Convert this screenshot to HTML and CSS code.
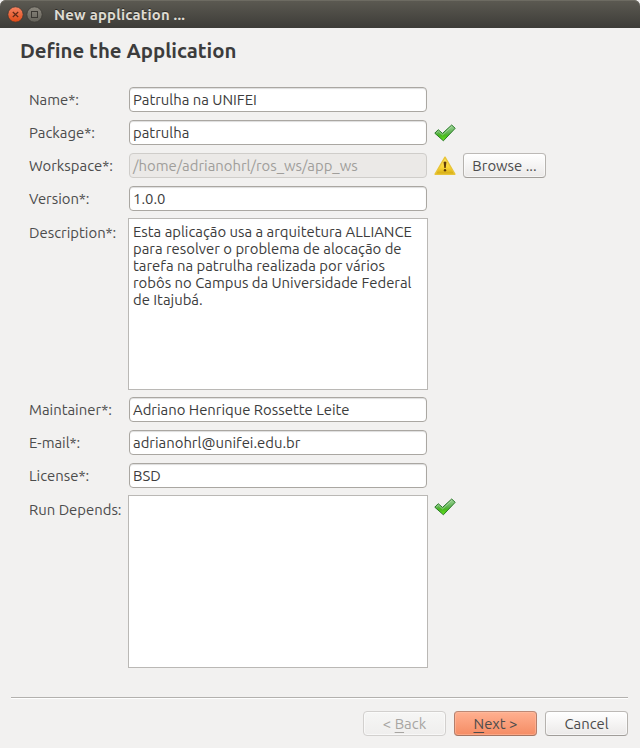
FILE: index.html
```html
<!DOCTYPE html>
<html lang="pt-BR">
<head>
<meta charset="utf-8">
<title>New application ...</title>
<link rel="stylesheet" href="styles.css">
</head>
<body>
<svg width="0" height="0" class="defs" aria-hidden="true">
  <defs>
    <linearGradient id="green" x1="0" y1="0" x2="0" y2="1"><stop offset="0" stop-color="#9fd49b"/><stop offset=".5" stop-color="#5fb350"/><stop offset=".65" stop-color="#48b820"/><stop offset="1" stop-color="#66e51c"/></linearGradient>
    <linearGradient id="yellow" x1="0" y1="0" x2="0" y2="1"><stop offset="0" stop-color="#ffe566"/><stop offset=".6" stop-color="#f9d535"/><stop offset="1" stop-color="#d2a810"/></linearGradient>
    <symbol id="check" viewBox="0 0 22 18"><path d="M.8 9.2 4.2 5.7 8.5 9.4 17.7 1 21.2 4.3 9.4 16.8Z" fill="url(#green)" stroke="#2a7a28" stroke-width="1" stroke-linejoin="round"/><path d="M2.3 9 4.4 7.1 8.6 10.9 17.7 2.5" fill="none" stroke="#c4e8bd" stroke-opacity=".65" stroke-width=".8"/></symbol>
  </defs>
</svg>
<div class="window">
  <header class="titlebar">
    <svg class="controls" width="37" height="18" viewBox="0 0 37 18">
      <defs><linearGradient id="close" x1="0" y1="0" x2="0" y2="1"><stop offset="0" stop-color="#f58463"/><stop offset="1" stop-color="#df4a16"/></linearGradient><linearGradient id="max" x1="0" y1="0" x2="0" y2="1"><stop offset="0" stop-color="#8b887e"/><stop offset="1" stop-color="#636159"/></linearGradient></defs>
      <circle cx="8.5" cy="9.5" r="7.7" fill="url(#close)" stroke="#3b3833" stroke-width=".8"/>
      <path d="m5.8 7 5.4 5m0-5-5.4 5" stroke="#5f2a18" stroke-width="1.2"/>
      <circle cx="27.5" cy="9.5" r="7.7" fill="url(#max)" stroke="#3b3833" stroke-width=".8"/>
      <rect x="24.5" y="6.5" width="6" height="6" fill="none" stroke="#3a3833" stroke-width="1"/>
    </svg>
    <span class="caption">New application ...</span>
  </header>
  <h1>Define the Application</h1>
  <main class="form">
    <div class="row"><span class="label">Name*:</span><div class="field">Patrulha na UNIFEI</div></div>
    <div class="row"><span class="label">Package*:</span><div class="field">patrulha</div><svg class="status" width="22" height="18"><use href="#check"/></svg></div>
    <div class="row"><span class="label">Workspace*:</span><div class="field disabled">/home/adrianohrl/ros_ws/app_ws</div><svg class="status" width="22" height="20" viewBox="0 0 22 20"><path d="M11 1.2 20.9 18.2H1.1Z" fill="url(#yellow)" stroke="#e8c437" stroke-width="1.4" stroke-linejoin="round"/><path d="M9.6 6q1.4-1.2 2.8 0l-.7 6h-1.4Z" fill="#5e3a08"/><circle cx="11" cy="14.2" r="1.2" fill="#5e3a08"/></svg><button class="button browse">Browse ...</button></div>
    <div class="row"><span class="label">Version*:</span><div class="field">1.0.0</div></div>
    <div class="row tall"><span class="label">Description*:</span><div class="area">Esta aplicação usa a arquitetura ALLIANCE<br>para resolver o problema de alocação de<br>tarefa na patrulha realizada por vários<br>robôs no Campus da Universidade Federal<br>de Itajubá.</div></div>
    <div class="row"><span class="label">Maintainer*:</span><div class="field">Adriano Henrique Rossette Leite</div></div>
    <div class="row"><span class="label">E-mail*:</span><div class="field">adrianohrl@unifei.edu.br</div></div>
    <div class="row"><span class="label">License*:</span><div class="field">BSD</div></div>
    <div class="row tall"><span class="label">Run Depends:</span><div class="area"></div><svg class="status" width="22" height="18"><use href="#check"/></svg></div>
  </main>
  <footer class="actions">
    <button class="button back" disabled>&lt; <u>B</u>ack</button>
    <button class="button next"><u>N</u>ext &gt;</button>
    <button class="button cancel">Cancel</button>
  </footer>
</div>
</body>
</html>
```
FILE: styles.css
```css
* { box-sizing: border-box; }
body { margin: 0; background: #f2f1f0; color: #3c3c3c; font: 14.87px/17px Ubuntu, "Noto Sans", sans-serif; }
.defs { position: absolute; }
.window { display: flex; flex-direction: column; width: 640px; height: 748px; overflow: hidden; white-space: nowrap; }
.titlebar { display: flex; align-items: center; height: 28px; flex: none; padding-left: 7px; border-radius: 6px 6px 0 0; background: linear-gradient(#5c5a52, #3d3c38); box-shadow: inset 0 1px #6d6b62; color: #dfdbd2; font-weight: bold; text-shadow: 0 -1px #2c2b28; }
.caption { margin: 0 0 0 10px; letter-spacing: .22px; }
h1 { margin: 11px 0 0 20px; height: 24px; font-size: 20.4px; line-height: 24px; }
.form { display: flex; flex-direction: column; gap: 8px; margin: 24px 0 0 29px; }
.row { display: flex; height: 25px; align-items: center; }
.label { width: 99px; flex: none; color: #4c4c4c; padding-bottom: 1px; }
.field { width: 298px; height: 25px; margin-left: 1px; padding: 3px 3px 0; border: 1px solid #aaa7a2; border-radius: 4px; background: #fff; box-shadow: inset 0 1px 1px #ddd; }
.disabled { background: #ebe9e7; border-color: #cfcdca; color: #a09e9b; box-shadow: none; }
.status { margin-left: 7px; flex: none; }
.tall { height: 172px; margin: -1px 0; align-items: flex-start; }
.tall .label { padding-top: 6px; }
.area { width: 300px; height: 100%; border: 1px solid #bab8b5; background: #fff; padding: 4px; }
.tall .status { margin: 3px 0 0 6px; }
.tall:last-child { height: 173px; }
.button { width: 83px; height: 25px; padding: 0; border: 1px solid #aaa7a3; border-color: #bcb9b6 #b5b2ae #a09d99; border-radius: 4px; background: linear-gradient(#fff, #ebe9e8); box-shadow: inset 0 0 0 1px #fff8; color: #4c4c4c; font: inherit; line-height: 22px; }
.browse { margin-left: 7px; }
.back { background: linear-gradient(#f6f6f5, #efeeed); border-color: #d2d0ce; color: #a7a5a2; }
.next { background: linear-gradient(#ffb090, #f58c64); border-color: #bd8874 #b47e6b #a57461; box-shadow: inset 0 0 0 1px #ffc2a880; }
.actions { display: flex; justify-content: flex-end; gap: 8px; margin: 30px 12px 0 11px; padding-top: 13px; border-top: 1px solid #b3b1ae; box-shadow: inset 0 1px #fff; }
u { text-underline-offset: 3px; text-decoration-thickness: 1px; }
```
